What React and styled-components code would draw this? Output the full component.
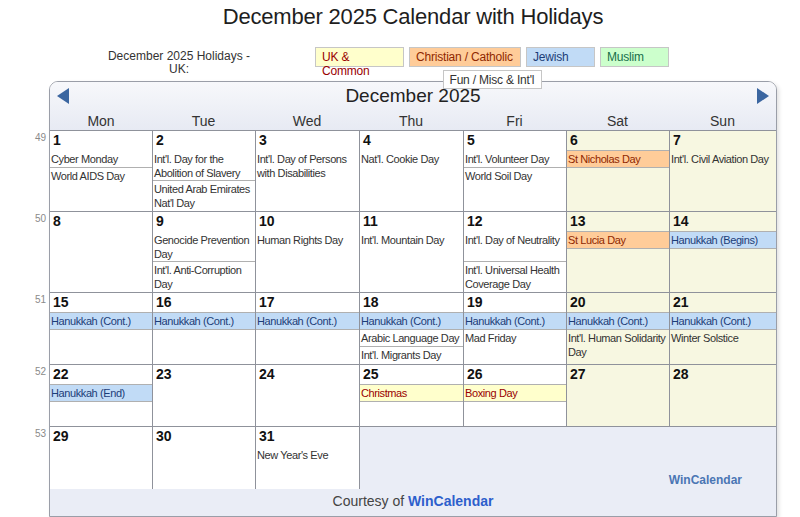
import React from 'react'
import styled, { createGlobalStyle } from 'styled-components'

const GlobalStyle = createGlobalStyle`
  html, body {
    margin: 0;
    padding: 0;
    background: #fff;
  }
  body {
    font-family: "Liberation Sans", Arial, sans-serif;
    color: #333;
  }
`

// column widths of the month table (last one takes the rest)
const COLS = '102px 103px 104px 104px 103px 103px 1fr'
const LINE = '#b0b0b0'
const GRID = '#8f929b'

const kinds = {
  uk: { bg: '#ffffcc', fg: '#990000' },
  christian: { bg: '#ffcc99', fg: '#8f2800' },
  jewish: { bg: '#c1dbf6', fg: '#1c3d78' },
  muslim: { bg: '#ccffcc', fg: '#17704a' },
  fun: { bg: '#ffffff', fg: '#333333' },
}

const Page = styled.div`
  width: 728px;
  margin-left: 49px;
`

const Title = styled.h1`
  margin: 0;
  padding-top: 4px;
  font-size: 22px;
  line-height: 26px;
  font-weight: normal;
  text-align: center;
  color: #1e1e1e;
  letter-spacing: -0.2px;
`

const Legend = styled.div`
  display: flex;
  align-items: flex-start;
  height: 34px;
  margin-top: 17px;
  padding-left: 55px;
  position: relative;
  z-index: 1;
`

const LegendLabel = styled.div`
  width: 150px;
  padding-top: 3px;
  font-size: 12px;
  line-height: 13px;
  text-align: center;
  color: #333;
`

const Keys = styled.div`
  display: flex;
  flex-wrap: wrap;
  justify-content: center;
  gap: 3px 5px;
  width: 354px;
  margin-left: 61px;
`

const Key = styled.div`
  box-sizing: border-box;
  width: ${p => p.$w}px;
  height: ${p => (p.$kind === 'fun' ? 19 : 20)}px;
  padding: 2px ${p => p.$pr || 4}px 0 6px;
  border: 1px solid #c6c6c6;
  background: ${p => kinds[p.$kind].bg};
  color: ${p => kinds[p.$kind].fg};
  font-size: 12px;
  line-height: 14px;
  letter-spacing: -0.2px;
  white-space: ${p => (p.$kind === 'uk' ? 'normal' : 'nowrap')};
`

const Calendar = styled.div`
  border: 1px solid #9a9ea8;
  border-radius: 9px 9px 0 0;
  background: #fff;
  box-shadow: 2px 2px 4px rgba(0, 0, 0, 0.12);
`

const Head = styled.div`
  border-radius: 8px 8px 0 0;
  background: linear-gradient(#f7f8fb, #e7eaf3);
`

const MonthBar = styled.div`
  display: flex;
  align-items: center;
  height: 27px;
  padding: 0 7px;
`

const MonthName = styled.div`
  flex: 1;
  text-align: center;
  font-size: 19px;
  line-height: 26px;
  color: #222;
`

const Arrow = styled.svg`
  width: 12px;
  height: 16px;
  display: block;
`

const DayNames = styled.div`
  display: grid;
  grid-template-columns: ${COLS};
  height: 21px;
`

const DayName = styled.div`
  padding-top: 4px;
  font-size: 14px;
  line-height: 17px;
  text-align: center;
  color: #333;
`

const Week = styled.div`
  display: grid;
  grid-template-columns: ${COLS};
  position: relative;
`

const WeekNum = styled.span`
  position: absolute;
  right: calc(100% + 4px);
  top: 2px;
  font-size: 10px;
  line-height: 12px;
  color: #8a8a8a;
`

const Cell = styled.div`
  box-sizing: border-box;
  min-height: 62px;
  border-top: 1px solid ${GRID};
  background: ${p => (p.$weekend ? '#f7f7e1' : '#fff')};

  & + & {
    border-left: 1px solid ${GRID};
  }
`

const DateNum = styled.div`
  padding-left: 3px;
  font-size: 14px;
  line-height: 19px;
  font-weight: bold;
  color: #111;
`

const Event = styled.div`
  min-height: ${p => (p.$lines ? p.$lines * 14 : 15)}px;
  padding: 1px 1px 0;
  font-size: 11px;
  line-height: 14px;
  letter-spacing: -0.4px;
  color: ${p => (p.$kind ? kinds[p.$kind].fg : '#333')};
  background: ${p => (p.$kind ? kinds[p.$kind].bg : 'transparent')};
  border-top: 1px solid ${p => (p.$kind ? LINE : 'transparent')};
  border-bottom: 1px solid ${p => (p.$kind ? LINE : 'transparent')};

  & + & {
    margin-top: -1px;
    border-top-color: ${LINE};
  }
`

const Filler = styled.div`
  grid-column: span 4;
  min-height: 63px;
  box-sizing: border-box;
  display: flex;
  align-items: flex-end;
  justify-content: flex-end;
  padding: 0 34px 2px 0;
  border-top: 1px solid ${GRID};
  border-left: 1px solid ${GRID};
  background: #eaedf6;
`

const SmallLink = styled.span`
  font-size: 12px;
  line-height: 14px;
  font-weight: bold;
  color: #4a76b4;
`

const Footer = styled.div`
  height: 27px;
  line-height: 24px;
  background: #eaedf6;
  text-align: center;
  font-size: 14px;
  color: #444;
`

const FooterLink = styled.span`
  font-weight: bold;
  color: #2d5fcc;
`

const J = 'jewish'

const weeks = [
  {
    num: 49,
    days: [
      { d: 1, ev: ['Cyber Monday', 'World AIDS Day'] },
      { d: 2, ev: ["Int'l. Day for the Abolition of Slavery", "United Arab Emirates Nat'l Day"] },
      { d: 3, ev: ["Int'l. Day of Persons with Disabilities"] },
      { d: 4, ev: ["Nat'l. Cookie Day"] },
      { d: 5, ev: ["Int'l. Volunteer Day", 'World Soil Day'] },
      { d: 6, ev: [{ t: 'St Nicholas Day', k: 'christian' }] },
      { d: 7, ev: ["Int'l. Civil Aviation Day"] },
    ],
  },
  {
    num: 50,
    days: [
      { d: 8, ev: [] },
      { d: 9, ev: ['Genocide Prevention Day', "Int'l. Anti-Corruption Day"] },
      { d: 10, ev: ['Human Rights Day'] },
      { d: 11, ev: ["Int'l. Mountain Day"] },
      { d: 12, ev: [{ t: "Int'l. Day of Neutrality", lines: 2 }, "Int'l. Universal Health Coverage Day"] },
      { d: 13, ev: [{ t: 'St Lucia Day', k: 'christian' }] },
      { d: 14, ev: [{ t: 'Hanukkah (Begins)', k: J }] },
    ],
  },
  {
    num: 51,
    days: [
      { d: 15, ev: [{ t: 'Hanukkah (Cont.)', k: J }] },
      { d: 16, ev: [{ t: 'Hanukkah (Cont.)', k: J }] },
      { d: 17, ev: [{ t: 'Hanukkah (Cont.)', k: J }] },
      { d: 18, ev: [{ t: 'Hanukkah (Cont.)', k: J }, 'Arabic Language Day', "Int'l. Migrants Day"] },
      { d: 19, ev: [{ t: 'Hanukkah (Cont.)', k: J }, 'Mad Friday'] },
      { d: 20, ev: [{ t: 'Hanukkah (Cont.)', k: J }, "Int'l. Human Solidarity Day"] },
      { d: 21, ev: [{ t: 'Hanukkah (Cont.)', k: J }, 'Winter Solstice'] },
    ],
  },
  {
    num: 52,
    days: [
      { d: 22, ev: [{ t: 'Hanukkah (End)', k: J }] },
      { d: 23, ev: [] },
      { d: 24, ev: [] },
      { d: 25, ev: [{ t: 'Christmas', k: 'uk' }] },
      { d: 26, ev: [{ t: 'Boxing Day', k: 'uk' }] },
      { d: 27, ev: [] },
      { d: 28, ev: [] },
    ],
  },
  {
    num: 53,
    days: [
      { d: 29, ev: [] },
      { d: 30, ev: [] },
      { d: 31, ev: ["New Year's Eve"] },
    ],
  },
]

const dayNames = ['Mon', 'Tue', 'Wed', 'Thu', 'Fri', 'Sat', 'Sun']

function DayCell({ day, weekend }) {
  return (
    <Cell $weekend={weekend}>
      <DateNum>{day.d}</DateNum>
      {day.ev.map((e, i) => {
        const item = typeof e === 'string' ? { t: e } : e
        return (
          <Event key={i} $kind={item.k} $lines={item.lines}>
            {item.t}
          </Event>
        )
      })}
    </Cell>
  )
}

export default function App() {
  return (
    <>
      <GlobalStyle />
      <Page>
        <Title>December 2025 Calendar with Holidays</Title>
        <Legend>
          <LegendLabel>December 2025 Holidays - UK:</LegendLabel>
          <Keys>
            <Key $kind="uk" $w={89} $pr={12}>UK &amp; Common</Key>
            <Key $kind="christian" $w={112}>Christian / Catholic</Key>
            <Key $kind="jewish" $w={69}>Jewish</Key>
            <Key $kind="muslim" $w={69}>Muslim</Key>
            <Key $kind="fun" $w={99}>Fun / Misc &amp; Int'l</Key>
          </Keys>
        </Legend>

        <Calendar>
          <Head>
            <MonthBar>
              <Arrow viewBox="0 0 12 16">
                <polygon points="12,0 0,8 12,16" fill="#3b66a0" />
              </Arrow>
              <MonthName>December 2025</MonthName>
              <Arrow viewBox="0 0 12 16">
                <polygon points="0,0 12,8 0,16" fill="#3b66a0" />
              </Arrow>
            </MonthBar>
            <DayNames>
              {dayNames.map(n => (
                <DayName key={n}>{n}</DayName>
              ))}
            </DayNames>
          </Head>

          {weeks.map(w => (
            <Week key={w.num}>
              <WeekNum>{w.num}</WeekNum>
              {w.days.map((day, i) => (
                <DayCell key={day.d} day={day} weekend={i >= 5} />
              ))}
              {w.days.length < 7 && (
                <Filler>
                  <SmallLink>WinCalendar</SmallLink>
                </Filler>
              )}
            </Week>
          ))}

          <Footer>
            Courtesy of <FooterLink>WinCalendar</FooterLink>
          </Footer>
        </Calendar>
      </Page>
    </>
  )
}
